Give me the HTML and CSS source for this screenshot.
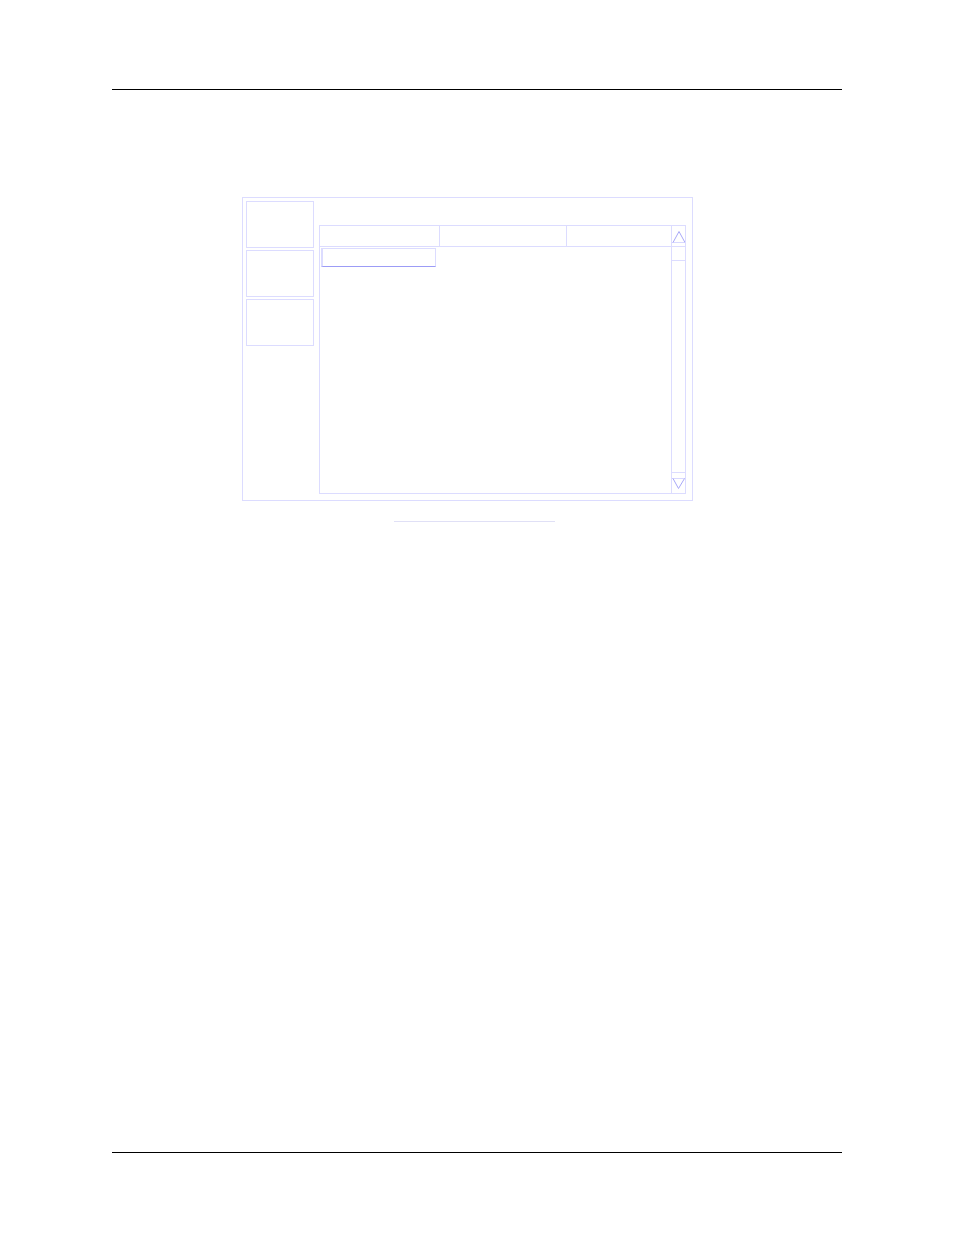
FILE: index.html
```html
<!DOCTYPE html>
<html lang="en">
<head>
<meta charset="utf-8">
<title>Manual page</title>
<link rel="stylesheet" href="styles.css">
</head>
<body class="page">
<hr class="rule">
<main class="content">
<figure class="figure">
  <div class="window">
    <nav class="sidebar" aria-label="Actions">
      <button class="action" type="button" aria-label="Action 1"></button>
      <button class="action" type="button" aria-label="Action 2"></button>
      <button class="action" type="button" aria-label="Action 3"></button>
    </nav>
    <section class="panel">
      <div class="list">
        <table class="table">
          <colgroup><col class="col-first"><col class="col-second"><col></colgroup>
          <thead><tr><th></th><th></th><th></th></tr></thead>
          <tbody><tr><td><input class="field" type="text" aria-label="Selected item"></td><td></td><td></td></tr></tbody>
        </table>
      </div>
      <div class="scrollbar">
        <button class="arrow arrow-up" type="button" aria-label="Scroll up">
          <svg class="icon" viewBox="0 0 13 20"><path class="base" d="M0 16.5H13"/><path class="sides" d="M1 16.5L7 5.5L13 16.5"/></svg>
        </button>
        <div class="thumb"></div>
        <div class="track"></div>
        <button class="arrow arrow-down" type="button" aria-label="Scroll down">
          <svg class="icon" viewBox="0 0 13 20"><path class="base" d="M0 5.5H13"/><path class="sides" d="M1 5.5L6.5 15.5L12.5 5.5"/></svg>
        </button>
      </div>
    </section>
  </div>
  <figcaption class="caption"></figcaption>
</figure>
</main>
<hr class="rule">
</body>
</html>
```

FILE: styles.css
```css
* {
  box-sizing: border-box;
}

.page {
  --line: #dcdcff;
  --line-strong: #9c9cf6;
  display: flex;
  flex-direction: column;
  min-height: 100vh;
  margin: 0;
  padding: 89px 112px 82px;
  background: #fff;
  font-family: "Liberation Sans", Arial, sans-serif;
}

.rule {
  width: 100%;
  height: 1px;
  margin: 0;
  border: 0;
  background: #000;
}

.content {
  flex: 1;
  padding: 107px 149px 0 130px;
}

.figure {
  margin: 0;
}

.window {
  display: flex;
  gap: 5px;
  padding: 3px 6px 6px 3px;
  border: 1px solid var(--line);
}

.sidebar {
  display: flex;
  flex: none;
  flex-direction: column;
  gap: 2px;
  width: 68px;
}

.action {
  height: 47px;
  padding: 0;
  border: 1px solid var(--line);
  border-radius: 0;
  background: #fff;
}

.panel {
  display: flex;
  flex: 1;
  min-height: 269px;
  margin-top: 24px;
  border: 1px solid var(--line);
}

.list {
  flex: 1;
}

.table {
  width: 100%;
  table-layout: fixed;
  border-spacing: 0;
}

.col-first {
  width: 120px;
}

.col-second {
  width: 127px;
}

.table th {
  height: 21px;
  padding: 0;
  border-right: 1px solid var(--line);
  border-bottom: 1px solid var(--line);
}

.table th:last-child {
  border-right: 0;
}

.table td {
  padding: 1px 4px 0 1px;
}

.field {
  display: block;
  width: 100%;
  height: 19px;
  padding: 0 4px;
  border: 1px solid var(--line);
  border-left-width: 2px;
  border-bottom-color: var(--line-strong);
  border-radius: 0;
  background: #fff;
  font: 12px "Liberation Sans", Arial, sans-serif;
}

.scrollbar {
  display: flex;
  flex: none;
  flex-direction: column;
  width: 14px;
  border-left: 1px solid var(--line);
}

.arrow {
  height: 21px;
  padding: 0;
  border: 0;
  background: #fff;
}

.arrow-up {
  border-bottom: 1px solid var(--line);
}

.arrow-down {
  border-top: 1px solid var(--line);
}

.icon {
  display: block;
  width: 13px;
  height: 20px;
  fill: none;
}

.base {
  stroke: #d8d8ff;
}

.sides {
  stroke: #a8a8f8;
}

.thumb {
  height: 14px;
  border-bottom: 1px solid var(--line);
}

.track {
  flex: 1;
}

.caption {
  width: 161px;
  height: 21px;
  margin-left: 152px;
  border-bottom: 1px solid #e0e0f6;
}
```
